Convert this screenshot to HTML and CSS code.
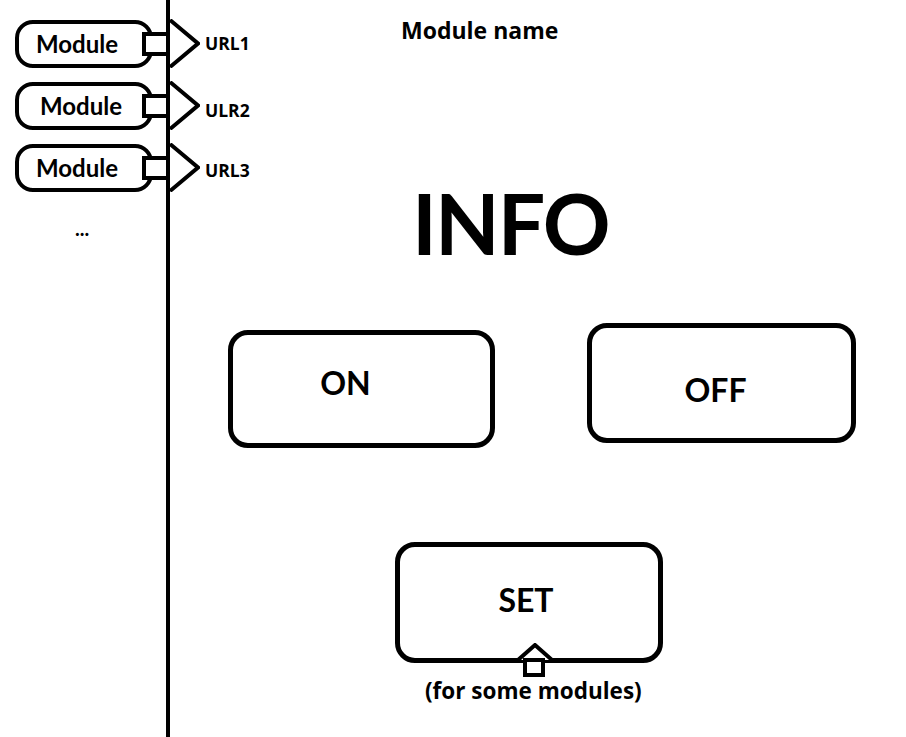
FILE: index.html
```html
<html lang="en">
<head>
    <meta charset="UTF-8">
    <meta name="viewport" content="width=device-width, initial-scale=1.0">
    <title>Module control</title>
    <link rel="stylesheet" href="styles.css">
</head>
<body>
    <div class="page">
        <div class="sidebar">
            <div class="module-row">
                <div class="module-box">Module</div>
                <div class="connector"></div>
                <svg class="arrow" width="30" height="49" viewBox="0 0 30 49">
                    <polyline points="0,1 28,24.5 0,48" fill="none" stroke="#000" stroke-width="4"/>
                </svg>
                <span class="url">URL1</span>
            </div>
            <div class="module-row">
                <div class="module-box shifted">Module</div>
                <div class="connector"></div>
                <svg class="arrow" width="30" height="49" viewBox="0 0 30 49">
                    <polyline points="0,1 28,24.5 0,48" fill="none" stroke="#000" stroke-width="4"/>
                </svg>
                <span class="url low">ULR2</span>
            </div>
            <div class="module-row">
                <div class="module-box">Module</div>
                <div class="connector"></div>
                <svg class="arrow" width="30" height="49" viewBox="0 0 30 49">
                    <polyline points="0,1 28,24.5 0,48" fill="none" stroke="#000" stroke-width="4"/>
                </svg>
                <span class="url lower">URL3</span>
            </div>
            <div class="more">...</div>
        </div>

        <div class="main">
            <div class="title">Module name</div>
            <div class="info">INFO</div>
            <div class="buttons">
                <button class="button on">ON</button>
                <button class="button off">OFF</button>
            </div>
            <button class="button set">SET</button>
            <svg class="set-arrow" width="40" height="37" viewBox="0 0 40 37">
                <polyline points="3,17 20,2 37,17" fill="#fff" stroke="#000" stroke-width="4"/>
                <rect x="10" y="17" width="18" height="15" fill="#fff" stroke="#000" stroke-width="4"/>
            </svg>
            <div class="note">(for some modules)</div>
        </div>
    </div>
</body>
</html>
```

FILE: styles.css
```css
body {
    font-family: Lato, "Open Sans", sans-serif;
    font-weight: bold;
    background-color: #ffffff;
    color: #000000;
    margin: 0;
    padding: 0;
}

.page {
    display: flex;
    height: 100vh;
}

.sidebar {
    box-sizing: border-box;
    width: 170px;
    flex-shrink: 0;
    border-right: 4px solid #000000;
    padding-top: 19px;
    display: flex;
    flex-direction: column;
    gap: 13px;
}

.module-row {
    display: flex;
    align-items: center;
    height: 49px;
    margin-left: 15px;
    width: 260px;
}

.module-box {
    box-sizing: border-box;
    width: 138px;
    height: 48px;
    border: 4px solid #000000;
    border-radius: 18px;
    display: flex;
    align-items: center;
    padding-left: 17px;
    font-size: 24px;
    flex-shrink: 0;
}

.module-box.shifted {
    padding-left: 21px;
}

.connector {
    box-sizing: border-box;
    width: 28px;
    height: 24px;
    margin-left: -11px;
    border: 4px solid #000000;
    background-color: #ffffff;
    flex-shrink: 0;
}

.arrow {
    display: block;
    flex-shrink: 0;
}

.url {
    font-family: "Open Sans", sans-serif;
    font-size: 17.5px;
    margin-left: 5px;
    margin-top: -2px;
}

.url.low {
    margin-top: 8px;
}

.url.lower {
    margin-top: 4px;
}

.more {
    font-size: 20px;
    line-height: 24px;
    margin-top: 11px;
    margin-left: 75px;
}

.main {
    flex: 1;
    display: flex;
    flex-direction: column;
    align-items: flex-start;
}

.title {
    font-family: "Open Sans", sans-serif;
    font-size: 23px;
    line-height: 24px;
    margin-top: 18px;
    margin-left: 231px;
}

.info {
    font-size: 84px;
    line-height: 84px;
    margin-top: 139px;
    margin-left: 242px;
    letter-spacing: -2px;
}

.buttons {
    display: flex;
    align-items: flex-start;
    gap: 92px;
    margin-top: 58px;
    margin-left: 58px;
}

.button {
    box-sizing: border-box;
    width: 268px;
    height: 120px;
    background-color: #ffffff;
    border: 5px solid #000000;
    border-radius: 20px;
    font-family: Lato, "Open Sans", sans-serif;
    font-weight: bold;
    font-size: 32px;
    line-height: 32px;
    color: #000000;
    display: flex;
    align-items: center;
    justify-content: center;
    padding: 0;
}

.button.on {
    height: 118px;
    width: 267px;
    margin-top: 7px;
    padding-right: 32px;
    padding-bottom: 12px;
}

.button.off {
    width: 269px;
    padding-right: 12px;
    padding-top: 14px;
}

.button.set {
    height: 121px;
    margin-top: 94px;
    margin-left: 225px;
    padding-right: 6px;
    padding-bottom: 6px;
}

.set-arrow {
    display: block;
    margin-top: -20px;
    margin-left: 345px;
}

.note {
    font-family: "Open Sans", sans-serif;
    font-size: 22.5px;
    line-height: 24px;
    margin-top: -1px;
    margin-left: 255px;
}
```
